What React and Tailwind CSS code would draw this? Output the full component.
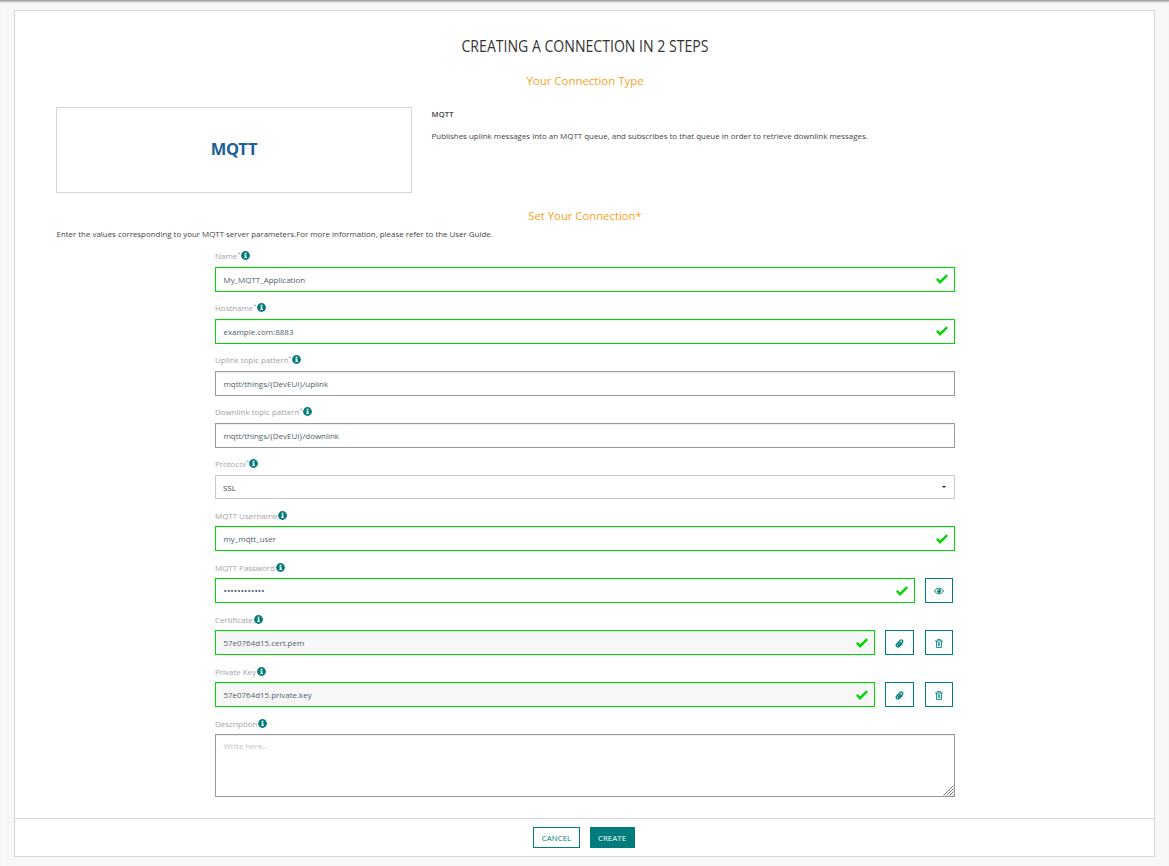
import React from "react";

const FIELDS = [
  { label: "Name", required: true, value: "My_MQTT_Application", valid: true },
  { label: "Hostname", required: true, value: "example.com:8883", valid: true },
  { label: "Uplink topic pattern", required: true, value: "mqtt/things/{DevEUI}/uplink" },
  { label: "Downlink topic pattern", required: true, value: "mqtt/things/{DevEUI}/downlink" },
];

function InfoIcon() {
  return (
    <svg viewBox="0 0 18 18" className="ml-px h-[9px] w-[9px] shrink-0">
      <circle cx="9" cy="9" r="8.8" fill="#007c7c" />
      <path d="M7.4 3.4h3.400v2.400H7.400zM6.800 7.200h4v5h1v2H6.600v-2h1V9h-.8z" fill="#fff" />
    </svg>
  );
}

function CheckIcon({ raised }) {
  return (
    <svg viewBox="0 0 12 10" className={`h-[10px] w-[12px] shrink-0 ${raised ? "mb-[2px]" : ""}`}>
      <path d="M.9 4.900 4.100 8.200 11.200 1.100" fill="none" stroke="#00d600" strokeWidth="2.400" />
    </svg>
  );
}

function EyeIcon() {
  return (
    <svg viewBox="0 0 18 14" className="h-[8px] w-[10px]">
      <path d="M1 7C4.5 .2 13.500 .2 17 7 13.500 13.800 4.500 13.800 1 7z" fill="none" stroke="#007c7c" strokeWidth="1.700" />
      <circle cx="9" cy="6.800" r="3.600" fill="#007c7c" />
      <circle cx="7.800" cy="5.400" r="1" fill="#fff" />
    </svg>
  );
}

function ClipIcon() {
  return (
    <svg viewBox="0 0 18 18" className="h-[9px] w-[9px]">
      <path
        d="M14 9.500 8.300 15.200c-3 3-8-1.200-5-4.700l7-7.700c2.600-2.600 7 .8 4.600 3.900l-6 6.600c-1.500 1.500-3.500-.3-2.300-1.800l4.900-5.400"
        fill="none"
        stroke="#007c7c"
        strokeWidth="2.500"
        strokeLinecap="round"
      />
    </svg>
  );
}

function TrashIcon() {
  return (
    <svg viewBox="0 0 16 18" className="h-[9px] w-[8px]">
      <path
        d="M0 4h16M5 3.500V1h6v2.500M3 4v13h10V4M6.600 6.500v8M9.400 6.500v8"
        fill="none"
        stroke="#007c7c"
        strokeWidth="1.700"
      />
    </svg>
  );
}

function Label({ text, required, tall }) {
  return (
    <div className={`flex items-start text-[7.95px] leading-[15px] text-[#a3a3a3] ${tall ? "h-[18px]" : "h-[17px]"}`}>
      <span>{text}</span>
      {required && <span className="-mt-0.5 w-[2.5px] text-[6px]">*</span>}
      <span className="mt-[2px] flex">
        <InfoIcon />
      </span>
    </div>
  );
}

function Box({ children, valid, filled, raised, className = "" }) {
  return (
    <div
      className={`flex h-[25px] items-center justify-between border pr-[6px] pl-[7.5px] text-[7.95px] text-[#50606b] shadow-[inset_0_1px_1px_rgba(0,0,0,0.07)] ${
        valid ? "border-[#00d600]" : "border-[#999]"
      } ${filled ? "bg-[#f7f7f7]" : "bg-white"} ${className}`}
    >
      <span className="pt-[3px]">{children}</span>
      {valid && <CheckIcon raised={raised} />}
    </div>
  );
}

function IconButton({ children, className }) {
  return (
    <button type="button" className={`flex h-[25px] items-center justify-center border border-[#007c7c] bg-white pt-px ${className}`}>
      {children}
    </button>
  );
}

function FileField({ label, value }) {
  return (
    <div className="h-[52px]">
      <Label text={label} />
      <div className="flex">
        <Box valid filled className="w-[660px]">{value}</Box>
        <IconButton className="ml-[10px] w-[29px]"><ClipIcon /></IconButton>
        <IconButton className="ml-[11px] w-[28px]"><TrashIcon /></IconButton>
      </div>
    </div>
  );
}

export default function App() {
  return (
    <div className="h-[866px] w-full bg-[#f7f7f7] pt-[10px] pl-[14px] font-['Open_Sans',sans-serif] text-[7.95px] text-[#444] shadow-[inset_0_1px_0_#a6a6a6,inset_0_2px_0_#c4c4c4,inset_0_3px_1px_#e6e6e6]">
      <div className="flex h-[847px] w-[1141px] flex-col border border-[#d6d6d6] bg-white">
        <div className="h-[807px] px-[41px] pt-[23px]">
          <h1 className="h-[24px] text-center text-[15.5px] leading-[24px] whitespace-nowrap text-[#333]">
            <span className="ml-px inline-block origin-center scale-x-[0.908]">CREATING A CONNECTION IN 2 STEPS</span>
          </h1>
          <h2 className="mt-[15px] ml-px h-[16px] text-center text-[11.45px] leading-[16px] text-[#f9a11b]">Your Connection Type</h2>

          <div className="mt-[18px] flex h-[86px]">
            <div className="flex w-[356px] items-center justify-center border border-[#d6d6d6]">
              <span className="pb-px font-['Noto_Sans',sans-serif] text-[16.5px] font-bold tracking-[-0.3px] text-[#1b6098]">MQTT</span>
            </div>
            <div className="ml-[19.5px] leading-[14px]">
              <div className="text-[7.6px] font-semibold tracking-[0.2px]">MQTT</div>
              <p className="mt-[8px]">
                Publishes uplink messages into an MQTT queue, and subscribes to that queue in order to retrieve downlink messages.
              </p>
            </div>
          </div>

          <h2 className="mt-[15px] ml-px h-[16px] text-center text-[11.3px] leading-[16px] text-[#f9a11b]">Set Your Connection*</h2>
          <p className="mt-[3px] ml-[0.5px] h-[14px] text-[7.91px] leading-[14px]">
            Enter the values corresponding to your MQTT server parameters.For more information, please refer to the User Guide.
          </p>

          <form className="mt-[8px] ml-[159px] w-[740px]">
            {FIELDS.map((f) => (
              <div key={f.label} className="h-[52px]">
                <Label text={f.label} required={f.required} tall />
                <Box valid={f.valid} raised>{f.value}</Box>
              </div>
            ))}

            <div className="h-[52px]">
              <Label text="Protocol" required tall />
              <div className="flex h-[24px] items-center justify-between border border-[#c8c8c8] pr-[8px] pl-[7px] text-[#444]">
                <span className="pt-[4px]">SSL</span>
                <svg viewBox="0 0 4 2" className="h-[2px] w-[4px]">
                  <path d="M0 0h4L2 2z" fill="#222" />
                </svg>
              </div>
            </div>

            <div className="h-[52px]">
              <Label text="MQTT Username" />
              <Box valid>my_mqtt_user</Box>
            </div>

            <div className="h-[52px]">
              <Label text="MQTT Password" />
              <div className="flex">
                <Box valid className="w-[700px]">
                  <span className="relative -top-px text-[9px] tracking-[0.05px]">••••••••••••</span>
                </Box>
                <IconButton className="ml-[10px] w-[28px]"><EyeIcon /></IconButton>
              </div>
            </div>

            <FileField label="Certificate" value="57e0764d15.cert.pem" />
            <FileField label="Private Key" value="57e0764d15.private.key" />

            <Label text="Description" />
            <div className="relative">
              <textarea
                placeholder="Write here..."
                className="block h-[63px] w-[740px] resize-none border border-[#999] px-[7.5px] py-[4px] text-[7.95px] leading-[14px] shadow-[inset_0_1px_1px_rgba(0,0,0,0.07)] placeholder:text-[#c4c4c4]"
              />
              <svg viewBox="0 0 11 11" className="absolute right-[1px] bottom-[1px] h-[11px] w-[11px]">
                <path d="M.5 10.500l10-10M3.500 10.500l7-7M6.500 10.500l4-4M9.500 10.500l1-1" stroke="#777" strokeWidth="1" />
              </svg>
            </div>
          </form>
        </div>

        <div className="flex h-[38px] justify-center gap-[10px] border-t border-[#d6d6d6] pt-[8px] pr-[2px] text-[7.95px]">
          <button type="button" className="h-[21px] w-[47px] border border-[#007c7c] bg-white pt-[2px] pl-px text-[#007c7c]">CANCEL</button>
          <button type="button" className="h-[21px] w-[45px] bg-[#007c7c] pt-[2px] text-white">CREATE</button>
        </div>
      </div>
    </div>
  );
}
